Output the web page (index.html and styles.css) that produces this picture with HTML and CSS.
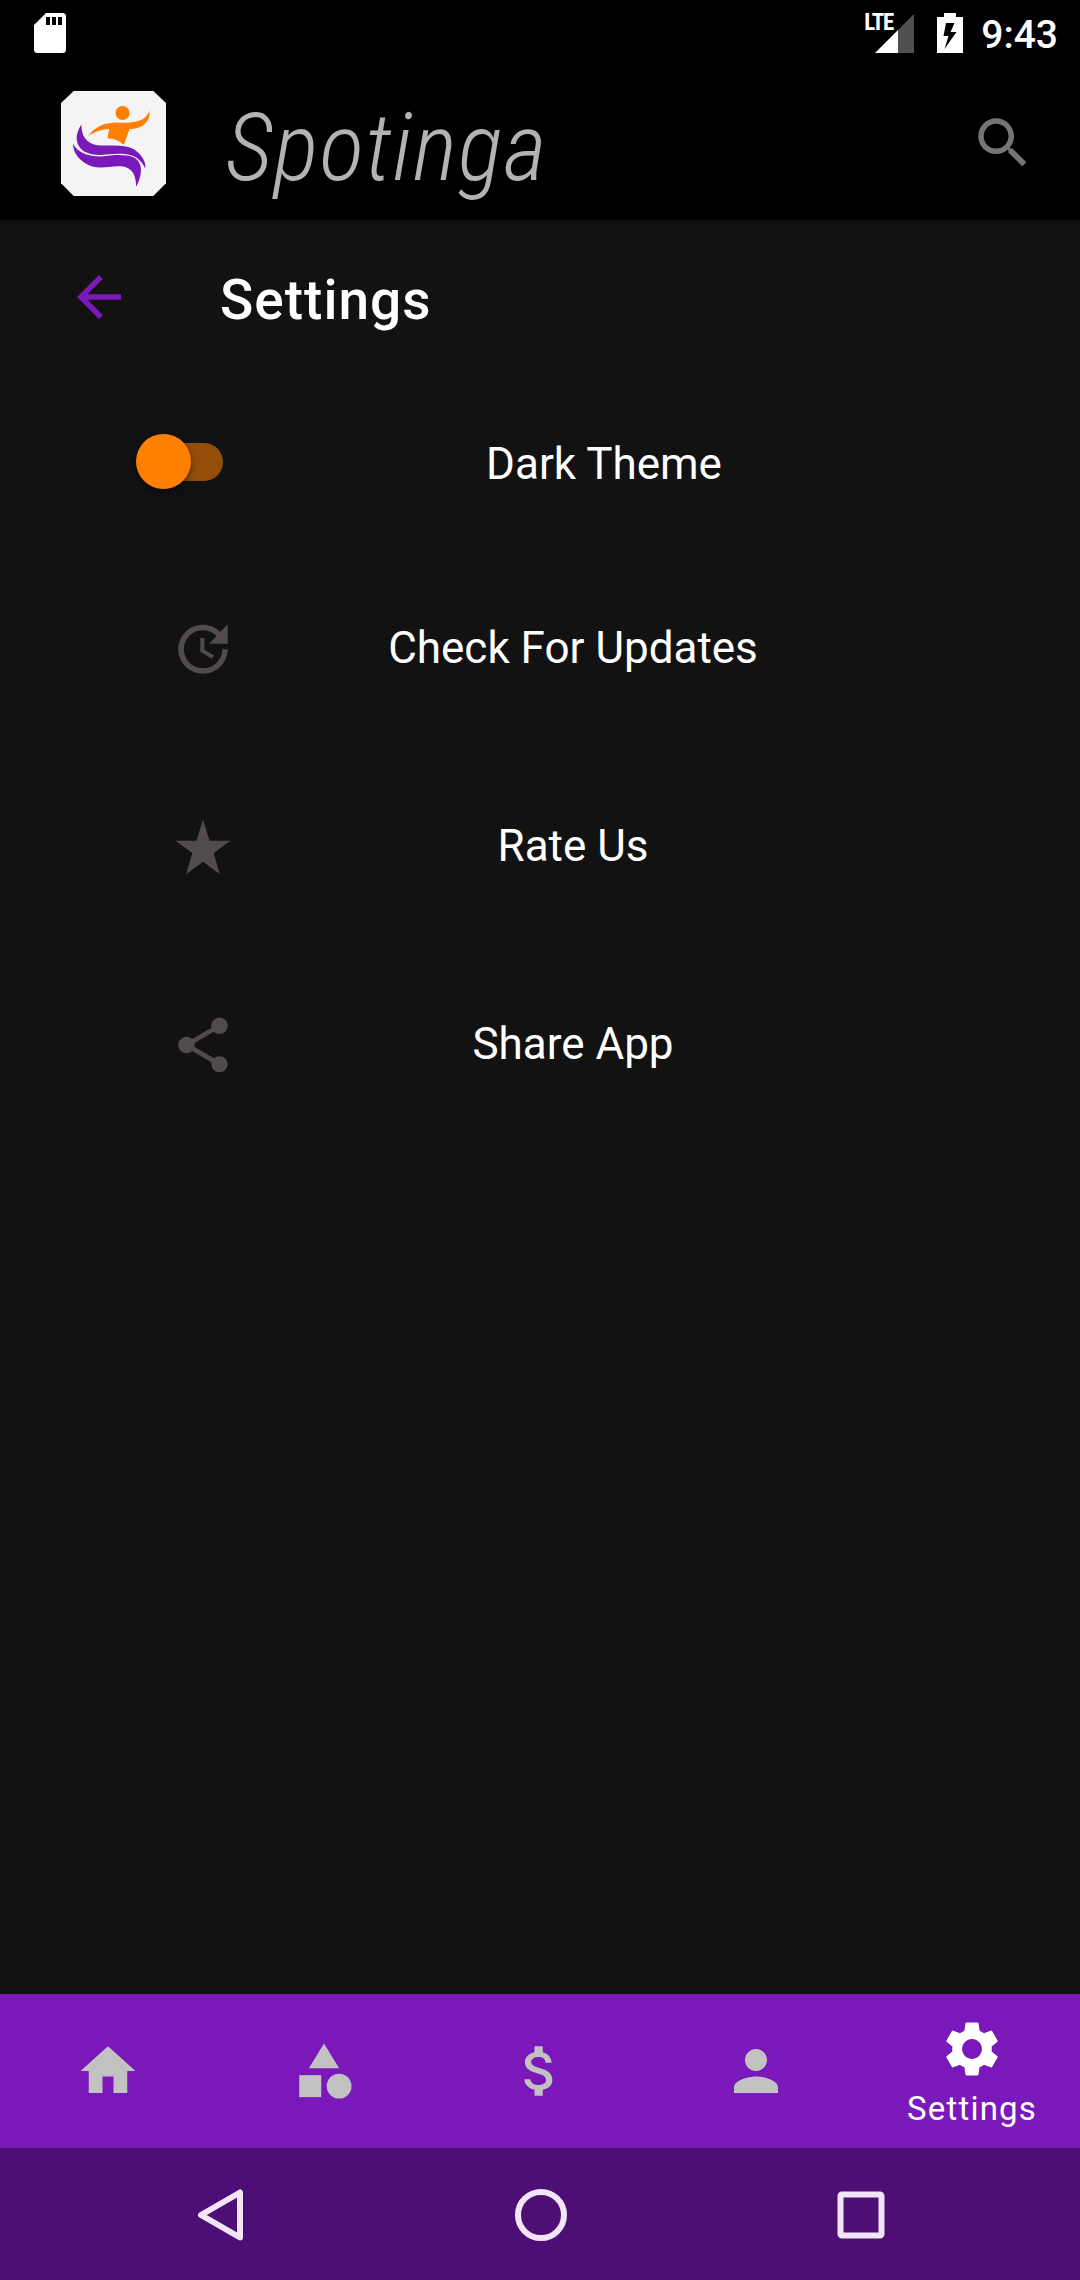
FILE: index.html
```
<!DOCTYPE html>
<html lang="en">
<head>
    <meta charset="UTF-8">
    <meta name="viewport" content="width=device-width, initial-scale=1.0">
    <title>Spotinga - Settings</title>
    <link rel="stylesheet" href="styles.css">
</head>
<body>
    <div class="screen">
        <div class="status-bar">
            <svg class="sd-card" viewBox="0 0 32 40"><path fill="#fff" fill-rule="evenodd" d="M12 0H28.500Q32 0 32 3.500V36.500Q32 40 28.500 40H3.500Q0 40 0 36.500V12ZM12 4V12H16V4ZM18 4V12H22V4ZM24 4V12H28V4Z"/></svg>
            <div class="status-right">
                <div class="signal">
                    <span class="lte">LTE</span>
                    <svg viewBox="0 0 39 39"><path fill="#505050" d="M39 0V39H23V16Z"/><path fill="#fff" d="M23 16V39H0Z"/></svg>
                </div>
                <svg class="battery" viewBox="0 0 26 40"><path fill="#fff" fill-rule="evenodd" d="M7 0H19V4H26V40H0V4H7ZM9 10L6.500 23H11.500L7.500 36L19.500 19H13.500L17.500 10Z"/></svg>
                <span class="time">9:43</span>
            </div>
        </div>

        <header class="app-bar">
            <svg class="logo" viewBox="32 32 314 314">
                <path fill="#f4f4f4" d="M70 32H308L346 68V308L308 346H70L32 308V68Z"/>
                <circle cx="216" cy="98" r="21" fill="#ff8000"/>
                <path fill="#ff8000" d="M112 168C135 136 165 126 200 126C252 130 288 120 297 90C300 120 280 144 237 146L220 193C205 180 190 174 171 173L176 146C150 148 130 155 112 168Z"/>
                <path fill="#7a18b9" d="M93 132C92 165 108 188 140 194C180 198 215 188 250 206C275 223 287 245 284 264C272 240 255 222 215 220C175 217 140 233 100 212C72 192 74 160 93 132Z"/>
                <path fill="#7a18b9" d="M68 190C82 215 105 227 150 228C190 223 225 220 250 231C282 248 272 290 257 318C256 290 250 260 210 257C180 255 160 265 125 258C90 245 68 220 68 190Z"/>
            </svg>
            <h1 class="brand">Spotinga</h1>
            <svg class="icon search" viewBox="0 0 24 24"><path d="M15.500 14h-.79l-.28-.27C15.410 12.590 16 11.110 16 9.500 16 5.910 13.090 3 9.500 3S3 5.910 3 9.500 5.910 16 9.500 16c1.610 0 3.090-.59 4.230-1.570l.27.28v.79l5 4.990L20.490 19l-4.990-5zm-6 0C7.010 14 5 11.990 5 9.500S7.010 5 9.500 5 14 7.010 14 9.500 11.990 14 9.500 14z"/></svg>
        </header>

        <main class="content">
            <div class="page-title">
                <svg class="icon back" viewBox="0 0 24 24"><path d="M20 11H7.830l5.590-5.590L12 4l-8 8 8 8 1.410-1.410L7.830 13H20v-2z"/></svg>
                <h2>Settings</h2>
            </div>

            <div class="theme-row">
                <div class="switch"><span class="thumb"></span></div>
                <span class="theme-label">Dark Theme</span>
            </div>

            <div class="option">
                <svg class="icon" viewBox="0 0 24 24"><path d="M21 10.120h-6.780l2.740-2.820c-2.730-2.700-7.150-2.800-9.880-.1-2.730 2.710-2.730 7.080 0 9.790s7.150 2.710 9.880 0C18.320 15.650 19 14.080 19 12.100h2c0 1.980-.88 4.550-2.640 6.290-3.510 3.480-9.210 3.480-12.720 0-3.500-3.470-3.530-9.110-.02-12.580s9.140-3.470 12.650 0L21 3v7.120zM12.500 8v4.250l3.500 2.080-.72 1.210L11 13V8h1.500z"/></svg>
                <span class="label">Check For Updates</span>
            </div>
            <div class="option">
                <svg class="icon" viewBox="0 0 24 24"><path d="M12 2.100l2.400 7.600H22l-6.100 4.500 2.200 7.700L12 17.400l-6.100 4.500 2.200-7.700L2 9.700h7.600z"/></svg>
                <span class="label">Rate Us</span>
            </div>
            <div class="option">
                <svg class="icon" viewBox="0 0 24 24"><path d="M18 16.080c-.76 0-1.440.3-1.960.77L8.910 12.700c.05-.23.09-.46.09-.7s-.04-.47-.09-.7l7.050-4.110c.54.5 1.250.81 2.040.81 1.660 0 3-1.340 3-3s-1.340-3-3-3-3 1.340-3 3c0 .24.04.47.09.7L8.040 9.810C7.500 9.310 6.790 9 6 9c-1.660 0-3 1.340-3 3s1.340 3 3 3c.79 0 1.500-.31 2.040-.81l7.120 4.160c-.05.21-.08.43-.08.65 0 1.610 1.310 2.920 2.920 2.920s2.920-1.310 2.920-2.920-1.310-2.920-2.920-2.920z"/></svg>
                <span class="label">Share App</span>
            </div>
        </main>

        <nav class="tabs">
            <div class="tab">
                <svg class="icon" viewBox="0 0 24 24"><path d="M10 20v-6h4v6h5v-8h3L12 3 2 12h3v8z"/></svg>
            </div>
            <div class="tab">
                <svg class="icon" viewBox="0 0 24 24"><path d="M12 2l-5.500 9h11z"/><circle cx="17.500" cy="17.500" r="4.500"/><path d="M3 13.500h8v8H3z"/></svg>
            </div>
            <div class="tab">
                <svg class="icon" viewBox="0 0 24 24"><path d="M11.800 10.900c-2.270-.59-3-1.200-3-2.150 0-1.090 1.010-1.850 2.700-1.850 1.780 0 2.440.85 2.500 2.100h2.210c-.07-1.720-1.120-3.300-3.210-3.810V3h-3v2.160c-1.940.42-3.500 1.680-3.500 3.610 0 2.310 1.910 3.460 4.700 4.130 2.500.6 3 1.480 3 2.410 0 .69-.49 1.790-2.700 1.790-2.060 0-2.870-.92-2.980-2.100h-2.200c.12 2.190 1.760 3.420 3.680 3.830V21h3v-2.150c1.950-.37 3.500-1.500 3.500-3.550 0-2.840-2.430-3.810-4.700-4.400z"/></svg>
            </div>
            <div class="tab">
                <svg class="icon" viewBox="0 0 24 24"><path d="M12 12c2.210 0 4-1.790 4-4s-1.790-4-4-4-4 1.790-4 4 1.790 4 4 4zm0 2c-2.670 0-8 1.340-8 4v2h16v-2c0-2.660-5.330-4-8-4z"/></svg>
            </div>
            <div class="tab active">
                <svg class="icon" viewBox="0 0 24 24"><path d="M19.140 12.940c.04-.3.06-.61.06-.94 0-.32-.02-.64-.07-.94l2.030-1.580c.18-.14.23-.41.12-.61l-1.920-3.320c-.12-.22-.37-.29-.59-.22l-2.390.96c-.5-.38-1.030-.7-1.620-.94l-.36-2.540c-.04-.24-.24-.41-.48-.41h-3.840c-.24 0-.43.17-.47.41l-.36 2.540c-.59.24-1.130.57-1.620.94l-2.390-.96c-.22-.08-.47 0-.59.22L2.740 8.870c-.12.21-.08.47.12.61l2.030 1.580c-.05.3-.09.63-.09.94s.02.64.07.94l-2.030 1.580c-.18.14-.23.41-.12.61l1.920 3.320c.12.22.37.29.59.22l2.390-.96c.5.38 1.030.7 1.620.94l.36 2.540c.05.24.24.41.48.41h3.840c.24 0 .44-.17.47-.41l.36-2.540c.59-.24 1.130-.56 1.620-.94l2.390.96c.22.08.47 0 .59-.22l1.920-3.320c.12-.22.07-.47-.12-.61l-2.010-1.580zM12 15.600c-1.980 0-3.600-1.620-3.600-3.600s1.620-3.600 3.600-3.600 3.600 1.620 3.600 3.600-1.620 3.600-3.600 3.600z"/></svg>
                <span class="tab-label">Settings</span>
            </div>
        </nav>

        <div class="system-nav">
            <svg viewBox="0 0 60 60"><path d="M50 7.500V52.500L11 30Z"/></svg>
            <svg viewBox="0 0 60 60"><circle cx="30" cy="30" r="23"/></svg>
            <svg viewBox="0 0 60 60"><rect x="9.500" y="9.500" width="41" height="41" rx="1.500"/></svg>
        </div>
    </div>
</body>
</html>
```
FILE: styles.css
```
html, body {
    margin: 0;
    padding: 0;
    background-color: #121212;
    font-family: Roboto, sans-serif;
    color: #fff;
}
.screen {
    display: flex;
    flex-direction: column;
    width: 1080px;
    height: 2280px;
    overflow: hidden;
}
svg {
    display: block;
    flex: none;
}
.icon {
    width: 66px;
    height: 66px;
    fill: currentColor;
}

/* Status bar */
.status-bar {
    display: flex;
    justify-content: space-between;
    align-items: center;
    height: 66px;
    padding: 0 22px 0 34px;
    background-color: #000;
}
.sd-card {
    width: 32px;
    height: 40px;
}
.status-right {
    display: flex;
    align-items: center;
}
.signal {
    position: relative;
    width: 39px;
    height: 39px;
    margin-right: 23px;
}
.lte {
    position: absolute;
    left: -11px;
    top: -4px;
    font-family: "Roboto Condensed", Roboto, sans-serif;
    font-stretch: 75%;
    font-size: 23px;
    line-height: 26px;
    font-weight: 700;
    letter-spacing: -1.2px;
}
.battery {
    width: 26px;
    height: 40px;
    margin-right: 18px;
}
.time {
    font-size: 39px;
    line-height: 46px;
    font-weight: 500;
    padding-top: 3px;
}

/* App bar */
.app-bar {
    display: flex;
    align-items: center;
    height: 154px;
    padding: 0 44px 0 60.5px;
    background-color: #000;
    box-shadow: 0 1px 5px rgba(0, 0, 0, 0.5);
}
.logo {
    width: 105px;
    height: 105px;
}
.brand {
    flex: 1;
    margin: 0 0 0 60px;
    padding-top: 10px;
    font-family: "Roboto Condensed", Roboto, sans-serif;
    font-stretch: 75%;
    font-size: 94px;
    line-height: 110px;
    font-weight: 300;
    font-style: italic;
    letter-spacing: 1.1px;
    color: #b3b3b3;
}
.search {
    color: #757575;
}

/* Settings page */
.content {
    flex: 1;
}
.page-title {
    display: flex;
    align-items: center;
    height: 154px;
    padding-left: 66px;
}
.back {
    color: #7a18b9;
}
.page-title h2 {
    margin: 0 0 0 88px;
    padding-top: 5px;
    font-size: 55px;
    line-height: 64px;
    font-weight: 500;
    letter-spacing: 1px;
}
.theme-row {
    display: flex;
    align-items: center;
    height: 176px;
    padding-left: 141px;
}
.switch {
    width: 82px;
    height: 38px;
    border-radius: 19px;
    background-color: #944e09;
}
.thumb {
    display: block;
    width: 55px;
    height: 55px;
    margin: -9px 0 0 -5px;
    border-radius: 50%;
    background-color: #ff8000;
    box-shadow: 0 3px 6px rgba(0, 0, 0, 0.5);
}
.theme-label {
    width: 400px;
    margin-left: 181px;
    text-align: center;
    font-size: 44px;
    line-height: 52px;
    padding-top: 4px;
}
.option {
    display: flex;
    align-items: center;
    height: 198px;
    padding-left: 170px;
}
.option .icon {
    color: #524b4b;
}
.label {
    width: 500px;
    margin-left: 87px;
    padding-bottom: 2px;
    text-align: center;
    font-size: 44px;
    line-height: 52px;
}

/* Bottom tabs */
.tabs {
    display: grid;
    grid-template-columns: repeat(5, 1fr);
    height: 154px;
    background-color: #7a18b9;
}
.tab {
    display: flex;
    flex-direction: column;
    align-items: center;
    justify-content: center;
    color: #c2c2c2;
}
.tab.active {
    justify-content: flex-start;
    padding-top: 22px;
    color: #fff;
}
.tab-label {
    margin-top: 7px;
    font-size: 33px;
    line-height: 40px;
    letter-spacing: 1.2px;
}

/* System navigation */
.system-nav {
    display: flex;
    justify-content: space-between;
    align-items: center;
    height: 131px;
    padding: 1px 189px 0 190px;
    background-color: #4d0e75;
}
.system-nav svg {
    width: 60px;
    height: 60px;
    fill: none;
    stroke: #f1e5f6;
    stroke-width: 6;
    stroke-linejoin: round;
}
```
